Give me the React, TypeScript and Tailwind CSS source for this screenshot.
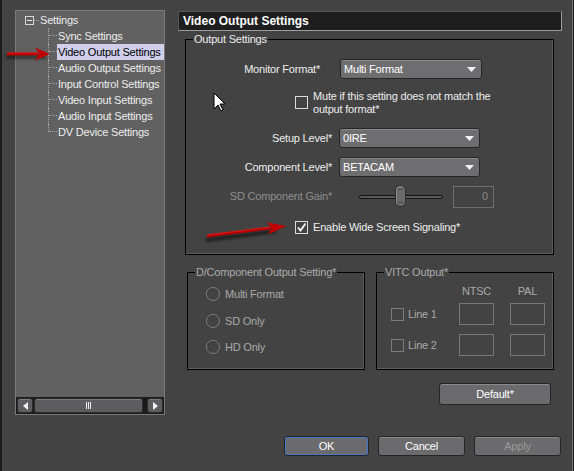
import React from 'react'

const treeItems = [
  'Sync Settings',
  'Video Output Settings',
  'Audio Output Settings',
  'Input Control Settings',
  'Video Input Settings',
  'Audio Input Settings',
  'DV Device Settings',
]

function Dropdown({ value, className }: { value: string; className: string }) {
  return (
    <div
      className={`${className} h-[20px] rounded-[3px] bg-[#6e6e70] border border-[#262626] shadow-[inset_0_1px_0_#8c8c8e] flex items-center justify-between pl-[3px] pr-[5px] text-white`}
    >
      <span>{value}</span>
      <svg width="9" height="5" viewBox="0 0 9 5">
        <path d="M0 0h9L4.5 5z" fill="#f2f2f2" />
      </svg>
    </div>
  )
}

function Button({ label, className, focused, disabled }: { label: string; className: string; focused?: boolean; disabled?: boolean }) {
  return (
    <div
      className={`${className} rounded-[3px] bg-[#6b6b6d] border border-[#242424] flex items-center justify-center ${
        focused ? 'shadow-[inset_0_0_0_1px_#4778c8]' : 'shadow-[inset_0_1px_0_#8a8a8c]'
      } ${disabled ? 'text-[#9a9a9a]' : 'text-white'}`}
    >
      {label}
    </div>
  )
}

function Legend({ children, muted }: { children: React.ReactNode; muted?: boolean }) {
  return (
    <span className={`absolute left-[7px] -top-[7px] bg-[#434343] px-[1px] leading-[13px] ${muted ? 'text-[#ababab]' : ''}`}>
      {children}
    </span>
  )
}

function Check({ checked, muted }: { checked?: boolean; muted?: boolean }) {
  return (
    <div className={`w-[13px] h-[13px] shrink-0 border ${muted ? 'border-[#7c7c7c]' : 'border-[#dcdcdc]'} flex items-center justify-center`}>
      {checked && (
        <svg width="11" height="11" viewBox="0 0 11 11">
          <path d="M2 5.5 L4.5 8.5 L9.5 1.5" fill="none" stroke="#ffffff" strokeWidth="1.8" />
        </svg>
      )}
    </div>
  )
}

function Radio({ label }: { label: string }) {
  return (
    <div className="flex items-center h-[14px]">
      <div className="w-[14px] h-[14px] rounded-full border border-[#7e7e7e] shadow-[inset_1px_1px_0_#3a3a3a]" />
      <span className="ml-[5px] text-[#a9a9a9]">{label}</span>
    </div>
  )
}

function RedArrow({ len, head, half }: { len: number; head: number; half: number }) {
  const b = len - head
  return (
    <g>
      <rect x="0" y="-1.5" width={b + 3} height="3" fill="#b30000" />
      <rect x="0" y="-1.5" width={b + 3} height="1" fill="#dd2020" />
      <path d={`M${b} ${-half} L${len} 0 L${b} ${half} L${b + 4} 0 Z`} fill="#c00000" />
    </g>
  )
}

export default function App() {
  return (
    <div className="w-[574px] h-[471px] bg-[#434343] flex relative overflow-hidden text-[11px] tracking-[-0.2px] text-[#ededed] font-['Liberation_Sans',Arial,sans-serif] shadow-[inset_2px_0_0_#1c1c1c,inset_-1px_0_0_#1a1a1a,inset_-2px_0_0_#777777]">
      {/* left tree */}
      <div className="w-[178px] shrink-0 pl-[15px] pt-[10px]">
        <div className="w-[150px] h-[405px] border border-[#7a7a7a] bg-[#616161] flex flex-col">
          <div className="flex-1 pt-[1px] overflow-hidden">
            <div className="h-[16px] flex items-center pl-[9px]">
              <div className="w-[9px] h-[9px] border border-[#d8d8d8] flex items-center justify-center">
                <div className="w-[5px] h-[1px] bg-[#e8e8e8]" />
              </div>
              <div className="w-[5px] border-b border-dotted border-[#a8a8a8]" />
              <span className="ml-[1px]">Settings</span>
            </div>
            <div className="pl-[32px]">
              {treeItems.map((item, i) => {
                const last = i === treeItems.length - 1
                const selected = item === 'Video Output Settings'
                return (
                  <div key={item} className="h-[16px] flex items-start">
                    <div className={`w-[9px] shrink-0 border-l border-dotted border-[#a8a8a8] ${last ? 'h-[8px]' : 'h-[16px]'}`}>
                      <div className="h-[8px] border-b border-dotted border-[#a8a8a8]" />
                    </div>
                    <div className={`h-[16px] flex-1 flex items-center pl-[1px] whitespace-nowrap overflow-hidden ${selected ? 'bg-[#cfcfec] text-black' : ''}`}>
                      {item}
                    </div>
                  </div>
                )
              })}
            </div>
          </div>
          <div className="h-[17px] bg-[#1b1b1b] flex items-center pl-[1px]">
            <div className="w-[16px] h-[15px] rounded-[3px] bg-[#5d5d5f] border border-[#2c2c2c] shadow-[inset_0_1px_0_#7a7a7a] flex items-center justify-center">
              <svg width="5" height="8" viewBox="0 0 5 8"><path d="M5 0v8L0 4z" fill="#f0f0f0" /></svg>
            </div>
            <div className="ml-[1px] w-[109px] h-[15px] rounded-[3px] bg-[#5d5d5f] border border-[#2c2c2c] shadow-[inset_0_1px_0_#7a7a7a] flex items-center justify-center gap-[1px]">
              <div className="w-[1px] h-[7px] bg-[#eeeeee]" />
              <div className="w-[1px] h-[7px] bg-[#eeeeee]" />
              <div className="w-[1px] h-[7px] bg-[#eeeeee]" />
            </div>
            <div className="ml-[4px] w-[16px] h-[15px] rounded-[3px] bg-[#5d5d5f] border border-[#2c2c2c] shadow-[inset_0_1px_0_#7a7a7a] flex items-center justify-center">
              <svg width="5" height="8" viewBox="0 0 5 8"><path d="M0 0v8L5 4z" fill="#f0f0f0" /></svg>
            </div>
          </div>
        </div>
      </div>

      {/* right side */}
      <div className="flex flex-col pt-[11px]">
        <div className="w-[384px] h-[20px] bg-[#1e1e1e] border-t border-l border-t-[#555555] border-l-[#555555] border-r border-b border-r-[#9c9c9c] border-b-[#9c9c9c] flex items-center pl-[4px] text-[12px] font-bold text-white tracking-[0px]">
          Video Output Settings
        </div>

        <div className="relative ml-[7px] mt-[8px] w-[369px] h-[216px] border border-black shadow-[inset_-1px_-1px_0_#5e5e5e]">
          <Legend>Output Settings</Legend>
          <div className="flex items-center mt-[19px]">
            <span className="w-[134px] text-right">Monitor Format*</span>
            <Dropdown value="Multi Format" className="ml-[20px] w-[142px]" />
          </div>
          <div className="flex items-start mt-[11px] ml-[109px]">
            <div className="mt-[6px]">
              <Check />
            </div>
            <span className="ml-[5px] leading-[13px]">
              Mute if this setting does not match the
              <br />
              output format*
            </span>
          </div>
          <div className="flex items-center mt-[12px]">
            <span className="w-[146px] text-right">Setup Level*</span>
            <Dropdown value="0IRE" className="ml-[7px] w-[141px]" />
          </div>
          <div className="flex items-center mt-[9px]">
            <span className="w-[146px] text-right">Component Level*</span>
            <Dropdown value="BETACAM" className="ml-[7px] w-[141px]" />
          </div>
          <div className="flex items-center mt-[8px] h-[23px]">
            <span className="w-[146px] text-right text-[#8e8e8e]">SD Component Gain*</span>
            <div className="relative ml-[27px] w-[84px] h-[23px] flex items-center">
              <div className="w-full h-[4px] rounded-[2px] bg-[#5a5a5a] border border-[#151515]" />
              <div className="absolute left-[36px] top-0 w-[11px] h-[22px] rounded-[5px] bg-[#6a6a6a] border border-[#2e2e2e] shadow-[inset_1px_1px_0_#8a8a8a] flex flex-col items-center justify-between py-[3px]">
                <div className="w-[5px] h-[1px] bg-[#4a4a4a]" />
                <div className="w-[5px] h-[1px] bg-[#4a4a4a]" />
              </div>
            </div>
            <div className="ml-[10px] w-[41px] h-[22px] border border-[#6e6e6e] flex items-center justify-end pr-[5px] text-[#8a8a8a]">
              0
            </div>
          </div>
          <div className="flex items-center mt-[11px] ml-[109px]">
            <Check checked />
            <span className="ml-[5px]">Enable Wide Screen Signaling*</span>
          </div>
        </div>

        <div className="flex mt-[17px]">
          <div className="relative ml-[9px] w-[178px] h-[98px] border border-black shadow-[inset_-1px_-1px_0_#5e5e5e] pl-[18px]">
            <Legend muted>D/Component Output Setting*</Legend>
            <div className="mt-[14px]">
              <Radio label="Multi Format" />
            </div>
            <div className="mt-[13px]">
              <Radio label="SD Only" />
            </div>
            <div className="mt-[12px]">
              <Radio label="HD Only" />
            </div>
          </div>
          <div className="relative ml-[11px] w-[178px] h-[98px] border border-black shadow-[inset_-1px_-1px_0_#5e5e5e] pl-[14px]">
            <Legend muted>VITC Output*</Legend>
            <div className="grid grid-cols-[52px_35px_35px] gap-x-[16px] mt-[12px] text-[#a9a9a9]">
              <div className="h-[13px]" />
              <div className="h-[13px] leading-[13px] text-center">NTSC</div>
              <div className="h-[13px] leading-[13px] text-center">PAL</div>
              <div className="mt-[5px] h-[22px] flex items-center whitespace-nowrap">
                <Check muted />
                <span className="ml-[4px]">Line 1</span>
              </div>
              <div className="mt-[5px] h-[22px] border border-[#777777]" />
              <div className="mt-[5px] h-[22px] border border-[#777777]" />
              <div className="mt-[9px] h-[22px] flex items-center whitespace-nowrap">
                <Check muted />
                <span className="ml-[4px]">Line 2</span>
              </div>
              <div className="mt-[9px] h-[22px] border border-[#777777]" />
              <div className="mt-[9px] h-[22px] border border-[#777777]" />
            </div>
          </div>
        </div>

        <div className="mt-[13px] ml-[261px]">
          <Button label="Default*" className="w-[112px] h-[22px]" />
        </div>

        <div className="flex mt-[31px] ml-[106px] gap-[9px]">
          <Button label="OK" className="w-[85px] h-[20px]" focused />
          <Button label="Cancel" className="w-[87px] h-[20px]" />
          <Button label="Apply" className="w-[87px] h-[20px]" disabled />
        </div>
      </div>

      {/* annotations */}
      <svg className="absolute left-0 top-0 pointer-events-none" width="574" height="471">
        <defs>
          <filter id="sh" x="-20%" y="-200%" width="140%" height="500%">
            <feGaussianBlur stdDeviation="1.6" />
          </filter>
        </defs>
        <g transform="translate(6,57)" filter="url(#sh)" opacity="0.6">
          <rect x="0" y="-1.5" width="40" height="3" fill="#000" />
        </g>
        <g transform="translate(7,54)">
          <RedArrow len={43} head={15} half={6.5} />
        </g>
        <g transform="translate(206,240) rotate(-7.2)" filter="url(#sh)" opacity="0.7">
          <rect x="0" y="-1.5" width="70" height="3" fill="#000" />
        </g>
        <g transform="translate(207,236) rotate(-7.2)">
          <RedArrow len={80} head={19} half={6} />
        </g>
        <path
          d="M214 93 L214 109 L218 105 L221 111 L223 110 L220 104 L225 104 Z"
          fill="#ffffff"
          stroke="#000000"
          strokeWidth="1"
          strokeLinejoin="miter"
        />
      </svg>
    </div>
  )
}
